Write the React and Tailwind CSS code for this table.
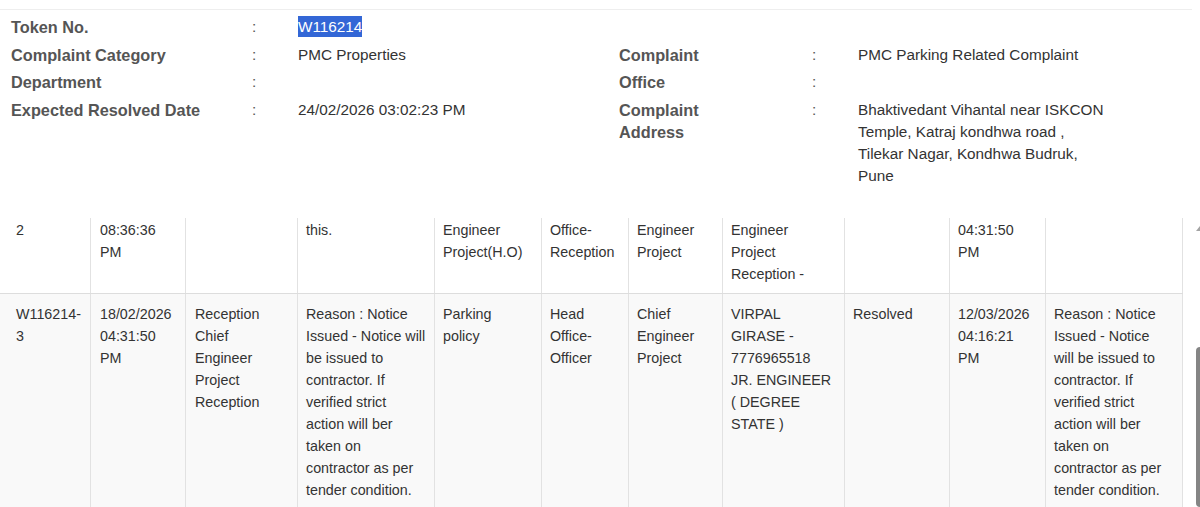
import React from 'react';

const info = [
    { label: 'Token No.', value: <span className="bg-[#3367d6] text-white py-[2px]">W116214</span> },
    {
        label: 'Complaint Category', value: 'PMC Properties',
        label2: 'Complaint', value2: 'PMC Parking Related Complaint',
    },
    { label: 'Department', value: '', label2: 'Office', value2: '' },
    {
        label: 'Expected Resolved Date', value: '24/02/2026 03:02:23 PM',
        label2: 'Complaint Address',
        value2: 'Bhaktivedant Vihantal near ISKCON Temple, Katraj kondhwa road , Tilekar Nagar, Kondhwa Budruk, Pune',
    },
];

// per-column padding, widths come from the grid template
const cellCls = [
    'pl-4 pr-[6px]',
    'border-l pl-[9px] pr-2',
    'border-l pl-[9px] pr-[12px]',
    'border-l pl-2 pr-[7px]',
    'border-l pl-2 pr-[14px]',
    'border-l px-2',
    'border-l px-2',
    'border-l pl-2 pr-[11px]',
    'border-l px-2',
    'border-l px-2',
    'border-l border-r pl-2 pr-[15px]',
];

const reason = 'Reason : Notice Issued - Notice will be issued to contractor. If verified strict action will ber taken on contractor as per tender condition.';

// first row is scrolled, only its lower lines show
const rowOne = [
    '2',
    '08:36:36 PM',
    '',
    'this.',
    'Engineer Project(H.O)',
    'Office-Reception',
    'Engineer Project',
    'Engineer Project Reception -',
    '',
    '04:31:50 PM',
    '',
];

const rowTwo = [
    <>W116214-<wbr />3</>,
    '18/02/2026 04:31:50 PM',
    'Reception Chief Engineer Project Reception',
    reason,
    'Parking policy',
    'Head Office-Officer',
    'Chief Engineer Project',
    'VIRPAL GIRASE - 7776965518 JR. ENGINEER ( DEGREE STATE )',
    'Resolved',
    '12/03/2026 04:16:21 PM',
    reason,
];

const gridCols = 'grid grid-cols-[90px_95px_112px_137px_107px_87px_94px_122px_105px_96px_138px]';

const ComplaintDetails = () => {
    return (
        <div className="h-[507px] w-[1200px] overflow-hidden bg-white font-['Liberation_Sans',Arial,sans-serif]">
            <div className="h-[10px] mr-[8px] border-b border-[#eeeeee]"></div>

            {/* Complaint summary */}
            <div className="grid grid-cols-[241px_46px_321px_193px_46px_252px] gap-y-[5.5px] pl-[11px] pt-[6px] leading-[22px]">
                {info.map((row, i) => (
                    <React.Fragment key={i}>
                        <div className="text-[16.3px] font-bold text-[#555]">{row.label}</div>
                        <div className="text-[15.3px] text-[#555]">:</div>
                        <div className="text-[15.3px] text-[#333]">{row.value}</div>
                        {row.label2 ? (
                            <>
                                <div className="text-[16.3px] font-bold text-[#555] pr-[50px]">{row.label2}</div>
                                <div className="text-[15.3px] text-[#555]">:</div>
                                <div className="text-[15.3px] text-[#333]">{row.value2}</div>
                            </>
                        ) : (
                            <div className="col-span-3"></div>
                        )}
                    </React.Fragment>
                ))}
            </div>

            {/* Action history table */}
            <div className="mt-[31.5px] flex h-[289px]">
                <div className="w-[1183px] shrink-0 overflow-hidden text-[14.3px] leading-[22px] text-[#333]">
                    <div className={`${gridCols} border-b border-[#dddddd]`}>
                        {rowOne.map((text, i) => (
                            <div key={i} className={`${cellCls[i]} border-[#e2e2e2] pt-px pb-2`}>{text}</div>
                        ))}
                    </div>
                    <div className={`${gridCols} bg-[#f9f9f9]`}>
                        {rowTwo.map((text, i) => (
                            <div key={i} className={`${cellCls[i]} border-[#e2e2e2] pt-[9px] pb-2`}>{text}</div>
                        ))}
                    </div>
                </div>

                {/* scrollbar, cut by the window edge */}
                <div className="w-[25px] shrink-0 flex flex-col pl-[13px]">
                    <svg className="mt-[8px]" width="8" height="5" viewBox="0 0 8 5">
                        <polygon points="4,0 8,5 0,5" fill="#a3a3a3" />
                    </svg>
                    <div className="mt-[116px] flex-1 w-[9px] rounded-[4px] bg-[#858585]"></div>
                </div>
            </div>
        </div>
    );
};

export default ComplaintDetails;
